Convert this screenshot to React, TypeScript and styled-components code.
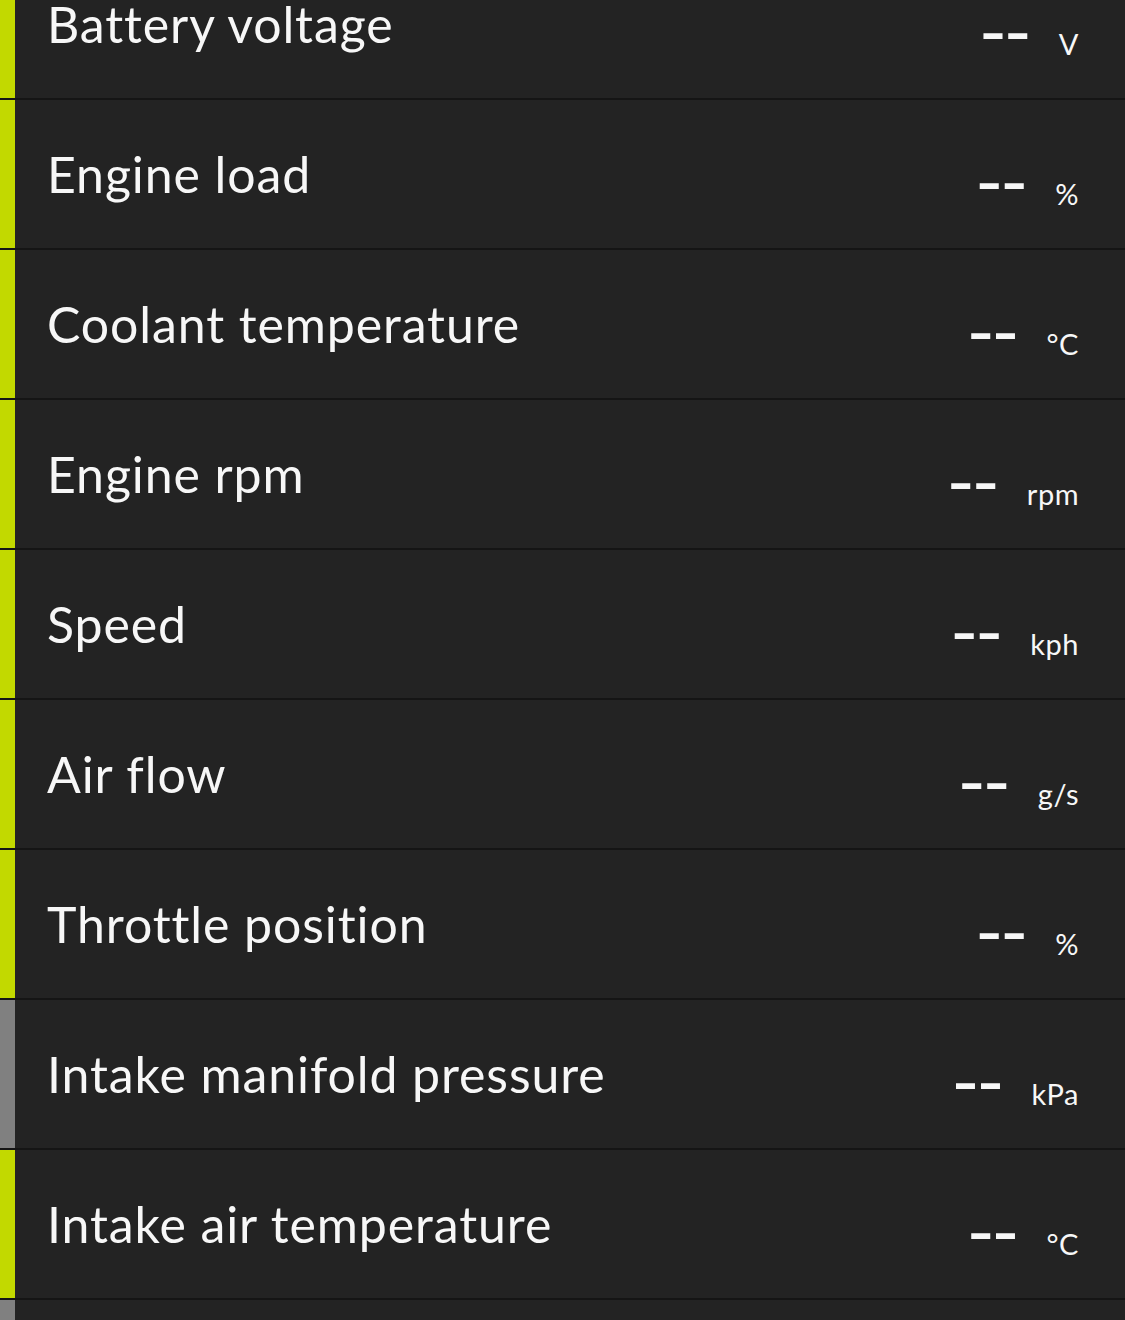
import React from 'react';
import styled, { createGlobalStyle } from 'styled-components';

const COLORS = {
  background: '#232323',
  divider: '#151515',
  text: '#f7f7f7',
  active: '#c2d900',
  inactive: '#808080',
};

const SENSORS = [
  { id: 'battery', label: 'Battery voltage', unit: 'V', active: true },
  { id: 'load', label: 'Engine load', unit: '%', active: true },
  { id: 'coolant', label: 'Coolant temperature', unit: '°C', active: true },
  { id: 'rpm', label: 'Engine rpm', unit: 'rpm', active: true },
  { id: 'speed', label: 'Speed', unit: 'kph', active: true },
  { id: 'maf', label: 'Air flow', unit: 'g/s', active: true },
  { id: 'throttle', label: 'Throttle position', unit: '%', active: true },
  { id: 'map', label: 'Intake manifold pressure', unit: 'kPa', active: false },
  { id: 'iat', label: 'Intake air temperature', unit: '°C', active: true },
  { id: 'fuel', label: 'Fuel level', unit: '%', active: false },
];

const GlobalStyle = createGlobalStyle`
  html, body {
    margin: 0;
    padding: 0;
    background: ${COLORS.background};
  }
  body {
    font-family: Lato, "Noto Sans", sans-serif;
    color: ${COLORS.text};
    overflow: hidden;
  }
`;

const App = (): React.JSX.Element => {
  return (
    <>
      <GlobalStyle />
      <Screen>
        <SensorList>
          {SENSORS.map((sensor) => (
            <SensorRow key={sensor.id}>
              <StatusBar $active={sensor.active} />
              <RowBody>
                <Label>{sensor.label}</Label>
                <Reading>
                  <Value>--</Value>
                  <Unit>{sensor.unit}</Unit>
                </Reading>
              </RowBody>
            </SensorRow>
          ))}
        </SensorList>
      </Screen>
    </>
  );
};

const Screen = styled.div`
  width: 1125px;
  height: 1320px;
  overflow: hidden;
  background: ${COLORS.background};
`;

const SensorList = styled.ul`
  list-style: none;
  margin: -50px 0 0;
  padding: 0;
  display: flex;
  flex-direction: column;
`;

const SensorRow = styled.li`
  display: flex;
  height: 150px;
  box-sizing: border-box;
  border-bottom: 2px solid ${COLORS.divider};
`;

const StatusBar = styled.div<{ $active: boolean }>`
  width: 15px;
  flex-shrink: 0;
  background: ${({ $active }) => ($active ? COLORS.active : COLORS.inactive)};
`;

const RowBody = styled.div`
  flex: 1;
  display: flex;
  align-items: center;
  padding: 0 46px 0 32px;
`;

const Label = styled.div`
  flex: 1;
  font-size: 50px;
  line-height: 1;
  letter-spacing: 0.9px;
  white-space: nowrap;
`;

const Reading = styled.div`
  align-self: stretch;
  display: flex;
  align-items: flex-start;
  gap: 29px;
`;

const Value = styled.div`
  font-family: "DejaVu Sans", sans-serif;
  font-size: 72px;
  line-height: 1;
  letter-spacing: -1px;
  margin-top: 45px;
`;

const Unit = styled.div`
  font-size: 29px;
  line-height: 1;
  letter-spacing: 0.5px;
  margin-top: 79px;
`;

export default App;
